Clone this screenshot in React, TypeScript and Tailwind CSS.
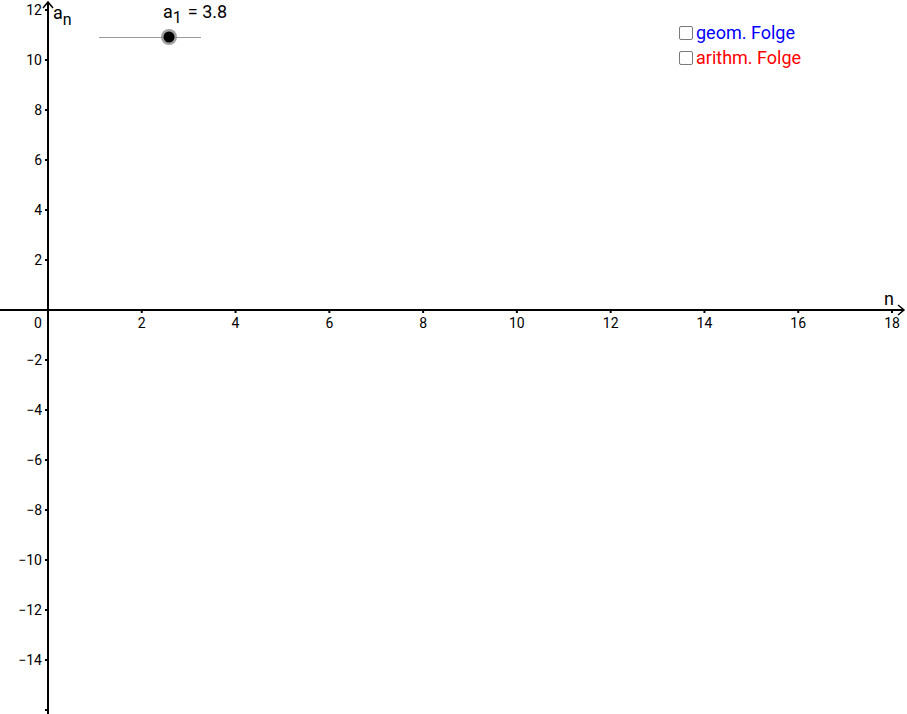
const ORIGIN_X = 48;
const ORIGIN_Y = 310;
const UNIT_X = (892 - 48) / 18;
const UNIT_Y = 25;

const xTicks = [2, 4, 6, 8, 10, 12, 14, 16, 18];
const yTicks = [12, 10, 8, 6, 4, 2, -2, -4, -6, -8, -10, -12, -14, -16];

const fmt = (v: number) => (v < 0 ? "\u2212" + Math.abs(v) : String(v));

function Axes() {
  return (
    <svg
      className="absolute inset-0"
      width={907}
      height={714}
      style={{ fontFamily: "Roboto, 'Liberation Sans', sans-serif" }}
    >
      {/* x axis */}
      <line x1={0} y1={ORIGIN_Y} x2={904} y2={ORIGIN_Y} stroke="#000" strokeWidth={2} />
      <polyline
        points={`898,305 904,310 898,315`}
        fill="none"
        stroke="#000"
        strokeWidth={1.5}
      />
      {/* y axis */}
      <line x1={ORIGIN_X} y1={2} x2={ORIGIN_X} y2={714} stroke="#000" strokeWidth={2} />
      <polyline
        points={`43,8 48,2 53,8`}
        fill="none"
        stroke="#000"
        strokeWidth={1.5}
      />

      {xTicks.map((t) => {
        const x = ORIGIN_X + t * UNIT_X;
        return (
          <g key={"x" + t}>
            <line x1={x} y1={ORIGIN_Y} x2={x} y2={ORIGIN_Y + 3} stroke="#000" strokeWidth={2} />
            <text x={x} y={328} fontSize={14} textAnchor="middle" fill="#000">
              {t}
            </text>
          </g>
        );
      })}
      <text x={38} y={328} fontSize={14} textAnchor="middle" fill="#000">
        0
      </text>

      {yTicks.map((t) => {
        const y = ORIGIN_Y - t * UNIT_Y;
        return (
          <g key={"y" + t}>
            <line x1={ORIGIN_X - 3} y1={y} x2={ORIGIN_X} y2={y} stroke="#000" strokeWidth={2} />
            {t !== -16 && (
              <text x={42} y={y + 5} fontSize={14} textAnchor="end" fill="#000">
                {fmt(t)}
              </text>
            )}
          </g>
        );
      })}

      {/* axis names */}
      <text x={53} y={19} fontSize={18} fill="#000">
        a
        <tspan fontSize={16} dy={6}>
          n
        </tspan>
      </text>
      <text x={884} y={305} fontSize={18} fill="#000">
        n
      </text>

      {/* slider a1 */}
      <line x1={99} y1={37.5} x2={201} y2={37.5} stroke="#999" strokeWidth={1} />
      <circle cx={169} cy={37} r={8} fill="#8a8a8a" opacity={0.8} />
      <circle cx={169} cy={37} r={5.5} fill="#000" />
    </svg>
  );
}

function Toggle(props: { label: string; color: string }) {
  return (
    <label className="flex items-center gap-[3px] h-[25px] cursor-pointer">
      <span className="w-[14px] h-[14px] border border-[#7a7a7a] rounded-[2px] bg-white" />
      <span className={"text-[18px] leading-none " + props.color}>{props.label}</span>
    </label>
  );
}

export default function App() {
  return (
    <div
      className="relative w-[907px] h-[714px] bg-white overflow-hidden"
      style={{ fontFamily: "Roboto, 'Liberation Sans', sans-serif" }}
    >
      <Axes />

      <div className="absolute left-[163px] top-[3px] text-[18px] leading-none text-black flex items-start">
        <span>a</span>
        <span className="text-[16px] mt-[7px]">1</span>
        <span className="ml-[6px]">= 3.8</span>
      </div>

      <div className="absolute left-[679px] top-[20px] flex flex-col">
        <Toggle label="geom. Folge" color="text-[#0000ff]" />
        <Toggle label="arithm. Folge" color="text-[#ff0000]" />
      </div>
    </div>
  );
}
